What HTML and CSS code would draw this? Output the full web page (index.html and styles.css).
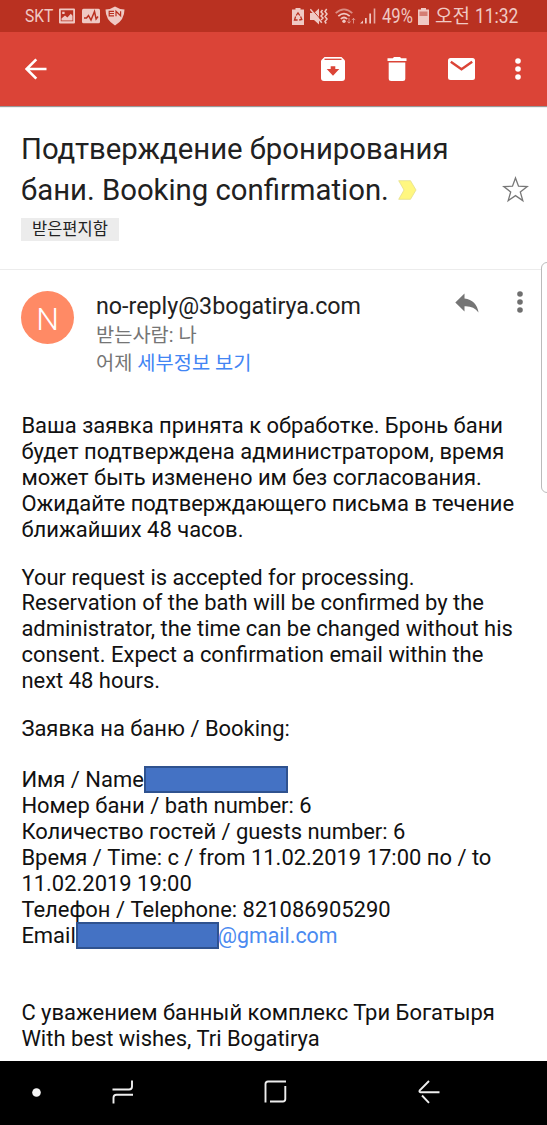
FILE: index.html
```html
<!DOCTYPE html>
<html lang="ko">
<head>
<meta charset="utf-8">
<title>Gmail</title>
<link rel="stylesheet" href="styles.css">
</head>
<body>
<div class="screen">
  <header class="status">
    <span class="status-text carrier">SKT</span>
    <svg class="icon-picture" width="16" height="16" viewBox="0 0 16 16"><path fill="currentColor" fill-rule="evenodd" d="M1 .5h14q1 0 1 1v13q0 1-1 1H1q-1 0-1-1v-13q0-1 1-1zM1.800 2.200v11h12.400v-11z"/><path fill="currentColor" d="M2.500 12.500v-2L6 7.500l2.400 2 3.400-3.800 1.700 2v4.800zM3.200 3.700h2.400v2.200H3.200z"/></svg>
    <svg class="icon-pulse" width="18" height="16" viewBox="0 0 18 16"><rect y=".7" width="18" height="14.600" rx="1.500" fill="currentColor"/><path d="M2 10h2.500l2-2.500L9 12l3.500-8.500 1.600 7.500L16 8.500" fill="none" stroke="#b93121" stroke-width="1.500"/></svg>
    <svg class="icon-shield" width="20" height="20" viewBox="0 0 20 20"><path fill="currentColor" d="M10 .5Q13.500 3 19.500 3.500 19.500 14 10 19.500.5 14 .5 3.500 6.500 3 10 .5z"/><path d="M9 5.300H4.200v4.500H9M4.200 7.500H9M11 10.200V5.300l4.600 4.500V5.300" fill="none" stroke="#b93121" stroke-width="1.200"/></svg>
    <svg class="icon-saver" width="12" height="17" viewBox="0 0 12 17"><path fill="currentColor" d="M3.500 0h5v1.500H12V17H0V1.500h3.500z"/><path d="M4.200 7.500 6 4.800l1.800 2.700M8.600 8.500l1.200 3-2.600.5M5.600 12H2.500l1.100-3.500" fill="none" stroke="#b93121" stroke-width="1.300"/></svg>
    <svg class="icon-mute" width="18" height="17" viewBox="0 0 18 17"><path fill="currentColor" d="M0 5h4l5-4.500v16L4 12H0z"/><path d="M1.500.800l12 14" stroke="#b93121" stroke-width="1"/><path d="M.3 1.300l11.500 13.500" stroke="currentColor" stroke-width="1.500"/><path d="M12.500 2l-1.500 2 2 2-2 2 2 2-2 2M16.700 1l-1.700 2.500 2 2.500-2 2.500 2 2.500-2 2.500 1.200 2" fill="none" stroke="currentColor" stroke-width="1.500"/></svg>
    <svg class="icon-wifi" width="21" height="17" viewBox="0 0 21 17"><g fill="none" stroke="currentColor" stroke-width="1.700"><path d="M.7 5.200q8.300-7.800 16.600 0" opacity=".6"/><path d="M3.300 8.200q5.700-5.300 11.400 0M5.800 11q3.200-3 6.400 0"/></g><circle cx="9" cy="13.300" r="1.700" fill="currentColor"/><path d="M14 10v5m-1.700-1.600 1.700 1.800 1.700-1.800M18.500 15.500v-5m-1.700 1.600 1.700-1.800 1.700 1.800" fill="none" stroke="currentColor" opacity=".6"/></svg>
    <svg class="icon-signal" width="16" height="16" viewBox="0 0 16 16"><path fill="currentColor" d="M0 15.500 3 12.500V15.500zM5 10h1.700v5.500H5zM9.300 5.500H11v10H9.300z"/><path fill="currentColor" opacity=".8" d="M13.700.5h1.600v15h-1.600z"/></svg>
    <span class="status-text percent">49%</span>
    <svg class="icon-battery" width="11" height="17" viewBox="0 0 11 17"><path fill="currentColor" d="M3 0h5v1.500h3V17H0V1.500h3z"/><path fill="#b93121" opacity=".5" d="M1.500 3.500h8v4.500h-8z"/></svg>
    <span class="status-text ampm">오전</span>
    <span class="status-text clock">11:32</span>
  </header>

  <nav class="toolbar">
    <svg class="tool-back" width="22" height="22" viewBox="0 0 22 22"><path d="M21.500 11H2M11.300 1.300 1.600 11l9.700 9.700" fill="none" stroke="#fff" stroke-width="2.600"/></svg>
    <svg width="24" height="24" viewBox="0 0 24 24"><path d="M3.500 0h17L24 3.500V21q0 3-3 3H3q-3 0-3-3V3.500z" fill="#fff"/><path d="M3.500 2.300h17" stroke="#db4437" stroke-width="1.300"/><path d="M9.700 9.200h4.600V12h4L12 18.800 5.700 12h4z" fill="#db4437"/></svg>
    <svg class="tool-trash" width="20" height="24" viewBox="0 0 20 24"><path d="M.5 1.300h5.300L7 0h6l1.200 1.300h5.300v2.800H.5zM1.700 5.500h16.600v16q0 2.500-2.500 2.500H4.200q-2.500 0-2.500-2.500z" fill="#fff"/></svg>
    <svg class="tool-mail" width="27" height="22" viewBox="0 0 27 22"><rect width="27" height="22" rx="2.500" fill="#fff"/><path d="M2.800 3.700 13.500 11.300 24.200 3.700" fill="none" stroke="#db4437" stroke-width="2.400"/></svg>
    <svg class="tool-more" width="6" height="22" viewBox="0 0 6 22" fill="#fff"><circle cx="3" cy="3" r="2.800"/><circle cx="3" cy="11" r="2.800"/><circle cx="3" cy="19" r="2.800"/></svg>
  </nav>

  <section class="subject">
    <div class="subject-main">
      <h1 class="title">Подтверждение бронирования<br>бани. Booking confirmation.<svg class="marker" width="19" height="20" viewBox="0 0 19 20"><path d="M.7.700H12.500L18 10l-5.500 9.300H.7L6 10z" fill="#fff780" stroke="#e5df8c" stroke-width=".8"/></svg></h1>
      <span class="label">받은편지함</span>
    </div>
    <svg class="star" width="27" height="27" viewBox="0 0 27 27"><path d="M13.500 2 16.500 10.200 25.300 10.500 18.300 15.900 20.800 24.600 13.500 19.600 6.200 24.600 8.700 15.900 1.700 10.500 10.500 10.200z" fill="none" stroke="#777" stroke-width="1.300"/></svg>
  </section>

  <main class="message">
    <div class="sender">
      <div class="avatar">N</div>
      <div class="sender-info">
        <div class="address">no-reply@3bogatirya.com</div>
        <div class="meta">받는사람: 나</div>
        <div class="meta">어제 <span class="link">세부정보 보기</span></div>
      </div>
      <svg class="reply" width="24" height="20" viewBox="0 0 24 20"><path d="M9.500 5.500V.5L.3 9.500l9.200 9v-5.200q9-.6 14 6.200Q21.500 7 9.500 5.500z" fill="#757575"/></svg>
      <svg class="more" width="6" height="22" viewBox="0 0 6 22" fill="#6f6f6f"><circle cx="3" cy="3" r="2.800"/><circle cx="3" cy="11" r="2.800"/><circle cx="3" cy="19" r="2.800"/></svg>
    </div>
    <div class="body">
      <p class="para">Ваша заявка принята к обработке. Бронь бани<br>будет подтверждена администратором, время<br>может быть изменено им без согласования.<br>Ожидайте подтверждающего письма в течение<br>ближайших 48 часов.</p>
      <p class="para">Your request is accepted for processing.<br>Reservation of the bath will be confirmed by the<br>administrator, the time can be changed without his<br>consent. Expect a confirmation email within the<br>next 48 hours.</p>
      <p class="para">Заявка на баню / Booking:</p>
      <div class="details">
        <div class="line">Имя / Name<span class="redact"></span></div>
        <div class="line">Номер бани / bath number: 6</div>
        <div class="line">Количество гостей / guests number: 6</div>
        <div class="line">Время / Time: с / from 11.02.2019 17:00 по / to</div>
        <div class="line">11.02.2019 19:00</div>
        <div class="line">Телефон / Telephone: 821086905290</div>
        <div class="line">Email<span class="redact redact-mail"></span><span class="mail">@gmail.com</span></div>
      </div>
      <p class="para closing">С уважением банный комплекс Три Богатыря<br>With best wishes, Tri Bogatirya</p>
    </div>
  </main>
  <div class="edge-handle"></div>

  <footer class="navbar">
    <svg class="nav-dot" width="9" height="9" viewBox="0 0 9 9"><circle cx="4.500" cy="4.500" r="4.300" fill="#f5f5f5"/></svg>
    <svg class="nav-recents" width="22" height="24" viewBox="0 0 22 24"><path d="M.5 9.500H17q3 0 3-3V.5M21 14.700H4.500q-3 0-3 3V23.500" fill="none" stroke="#eee" stroke-width="1.900"/></svg>
    <svg class="nav-home" width="23" height="24" viewBox="0 0 23 24"><path d="M1.500 22.500V4q0-2.500 2.500-2.500H22M21.300 6V19q0 2.500-2.500 2.500H6" fill="none" stroke="#eee" stroke-width="1.900"/></svg>
    <svg class="nav-back" width="22" height="24" viewBox="0 0 22 24"><path d="M11 1 1.800 10.300Q.8 12.200 2.500 12.200H21.500M4 15.500l7 7.300" fill="none" stroke="#eee" stroke-width="1.900"/></svg>
  </footer>
</div>
</body>
</html>
```
FILE: styles.css
```css
* { box-sizing: border-box; }
body { margin: 0; font-family: Roboto, "Noto Sans CJK KR", sans-serif; background: #fff; }
svg { display: block; flex: none; }
.screen { position: relative; width: 547px; height: 1125px; display: flex; flex-direction: column; overflow: hidden; }

.status { height: 32px; flex: none; display: flex; align-items: center; padding-left: 25px; background: #b93121; color: #f0c9c4; }
.status-text { font-size: 19px; line-height: 32px; white-space: nowrap; transform: scaleX(.82); transform-origin: left; flex: none; }
.carrier { width: 34px; }
.icon-picture { margin-right: 7px; }
.icon-pulse { margin-right: 5px; }
.icon-shield { margin-right: 167px; }
.icon-saver { margin-right: 6px; }
.icon-mute { margin-right: 7px; }
.icon-wifi { margin-right: 4px; }
.icon-signal { margin-right: 6px; }
.percent { width: 36px; font-size: 20px; transform: scaleX(.83); }
.icon-battery { margin-right: 6px; }
.ampm { width: 40px; padding-top: 2px; font-size: 19px; transform: none; }
.clock { font-size: 20px; transform: scaleX(.87); }

.toolbar { height: 74px; flex: none; display: flex; align-items: center; padding-left: 25px; background: #db4437; box-shadow: 0 1px 1px #999; }
.tool-back { margin-right: 274px; }
.tool-trash { margin-left: 42px; }
.tool-mail { margin-left: 41px; }
.tool-more { margin-left: 40px; }

.subject { height: 164px; flex: none; display: flex; justify-content: space-between; padding: 23px 18px 0 21px; border-bottom: 1px solid #ececec; }
.title { margin: 0; font-size: 29.300px; font-weight: 400; line-height: 41px; color: #212121; white-space: nowrap; }
.marker { display: inline-block; margin-left: 9px; vertical-align: 0; }
.label { display: block; width: 98px; height: 23px; margin-top: 7px; padding-left: 11px; background: #ececec; color: #222; font-size: 16.500px; line-height: 24px; white-space: nowrap; }
.star { margin-top: 47px; }

.message { flex: 1; min-height: 0; padding: 21px 0 0 21px; }
.sender { display: flex; height: 122px; }
.avatar { flex: none; width: 53px; height: 53px; border-radius: 50%; background: #ff8a65; color: #fff; font-size: 32px; font-weight: 300; line-height: 56px; text-align: center; }
.sender-info { flex: none; width: 380px; padding-left: 22px; white-space: nowrap; }
.address { margin-bottom: 1px; font-size: 23.250px; line-height: 30px; color: #212121; }
.meta { font-size: 19.800px; line-height: 27.500px; color: #757575; }
.link { color: #4285f4; }
.reply { margin-top: 2px; margin-left: 1px; }
.more { margin-left: 38px; }
.body { padding-left: .4px; font-size: 21.960px; line-height: 25.900px; color: #111; white-space: nowrap; }
.para { margin: 0 0 22px; }
.details { margin: 25.500px 0 51px; }
.closing { margin-bottom: 0; }
.line { display: flex; }
.redact { width: 144px; height: 27px; margin-top: -1px; margin-bottom: -1px; background: #4472c4; border: 2px solid #2f528f; }
.redact-mail { width: 143px; }
.mail { color: #4a8af0; margin-left: -1px; font-size: 21.400px; }

.edge-handle { position: absolute; left: 541px; top: 262px; width: 12px; height: 231px; border: 1px solid #bbb; border-radius: 7px; background: #fff; }

.navbar { height: 64px; flex: none; display: flex; align-items: center; padding: 0 0 2px 32px; background: #000; }
.nav-recents { margin-left: 71px; }
.nav-home { margin-left: 130px; }
.nav-back { margin-left: 131px; }
```
